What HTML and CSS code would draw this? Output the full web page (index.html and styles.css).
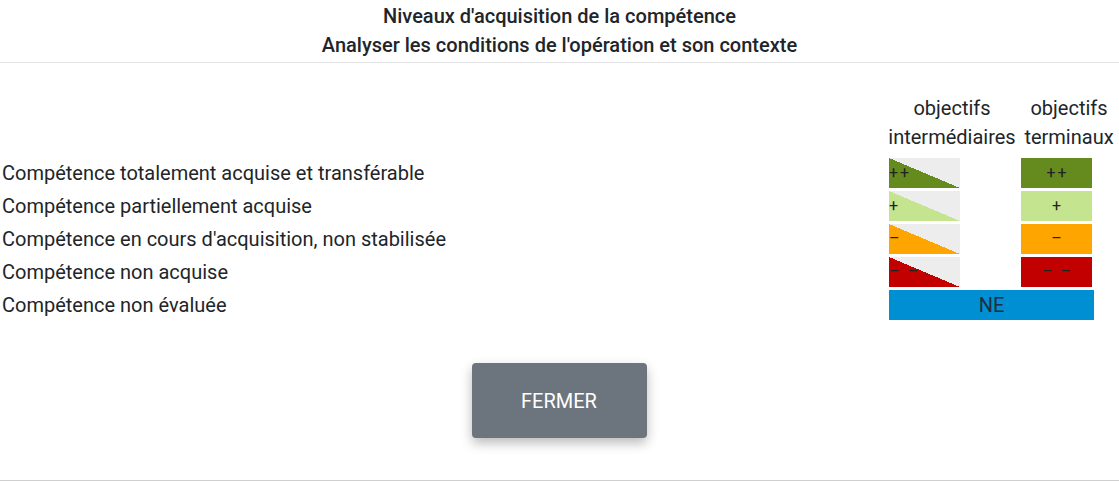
FILE: index.html
```html
<!DOCTYPE html>
<html lang="fr">
<head>
<meta charset="utf-8">
<title>Niveaux d'acquisition</title>
<link rel="stylesheet" href="styles.css">
</head>
<body>
<div class="modal">
  <header class="title">
    <div>Niveaux d'acquisition de la compétence</div>
    <div>Analyser les conditions de l'opération et son contexte</div>
  </header>
  <section class="legend">
    <div class="head"></div>
    <div class="head">objectifs<br>intermédiaires</div>
    <div class="head">objectifs<br>terminaux</div>

    <div class="label">Compétence totalement acquise et transférable</div>
    <div class="cell"><div class="sw tri tri-a">++</div></div>
    <div class="cell"><div class="sw full c-a">++</div></div>

    <div class="label">Compétence partiellement acquise</div>
    <div class="cell"><div class="sw tri tri-b">+</div></div>
    <div class="cell"><div class="sw full c-b">+</div></div>

    <div class="label">Compétence en cours d'acquisition, non stabilisée</div>
    <div class="cell"><div class="sw tri tri-c">–</div></div>
    <div class="cell"><div class="sw full c-c">–</div></div>

    <div class="label">Compétence non acquise</div>
    <div class="cell"><div class="sw tri tri-d">– –</div></div>
    <div class="cell"><div class="sw full c-d">– –</div></div>

    <div class="label">Compétence non évaluée</div>
    <div class="cell span2"><div class="ne">NE</div></div>
  </section>
  <div class="actions">
    <button class="btn" type="button">FERMER</button>
  </div>
</div>
</body>
</html>
```

FILE: styles.css
```css
* { box-sizing: border-box; }
html, body { margin: 0; padding: 0; background: #fff; }
body {
  font-family: Roboto, "Liberation Sans", sans-serif;
  color: #212529;
  width: 1119px;
  height: 481px;
  overflow: hidden;
}
.modal {
  height: 481px;
  border-bottom: 1px solid #cfcfcf;
}
.title {
  text-align: center;
  font-size: 20px;
  font-weight: 500;
  line-height: 29px;
  padding: 2px 0 2px;
  border-bottom: 1px solid #e3e3e6;
}
.legend {
  display: grid;
  grid-template-columns: 887px 132px 100px;
  grid-template-rows: 62px;
  grid-auto-rows: 30px;
  row-gap: 3px;
  margin-top: 30px;
  font-size: 20px;
}
.head {
  line-height: 29px;
  text-align: center;
  padding-top: 1px;
  white-space: nowrap;
}
.legend > .head:nth-child(2) { padding-right: 2px; }
.label {
  padding-left: 2px;
  line-height: 30px;
  white-space: nowrap;
}
.cell { padding-left: 2px; }
.span2 { grid-column: 2 / span 2; }
.sw {
  width: 71px;
  height: 30px;
  font-size: 16px;
  line-height: 30px;
  color: #222;
  letter-spacing: 2px;
  white-space: pre;
}
.tri { padding-left: 0; text-align: left; }
.full { text-align: center; padding-left: 2px; }
.tri-a { background: linear-gradient(to top right, #658b1f 50%, #ededed 50%); }
.tri-b { background: linear-gradient(to top right, #c5e48f 50%, #ededed 50%); }
.tri-c { background: linear-gradient(to top right, #ffa500 50%, #ededed 50%); }
.tri-d { background: linear-gradient(to top right, #c20000 50%, #ededed 50%); }
.c-a { background: #658b1f; }
.c-b { background: #c5e48f; }
.c-c { background: #ffa500; }
.c-d { background: #c20000; }
.ne {
  width: 205px;
  height: 30px;
  background: #008fd2;
  color: #1f2d3d;
  text-align: center;
  line-height: 30px;
  font-size: 20px;
}
.actions {
  display: flex;
  justify-content: center;
  margin-top: 43px;
  padding-right: 2px;
}
.btn {
  width: 175px;
  height: 75px;
  background: #6c757d;
  color: #fff;
  border: none;
  border-radius: 4px;
  font-family: Roboto, "Liberation Sans", sans-serif;
  font-size: 20px;
  box-shadow: 0 5px 12px rgba(0,0,0,0.28);
  margin-left: 1px;
}
```
